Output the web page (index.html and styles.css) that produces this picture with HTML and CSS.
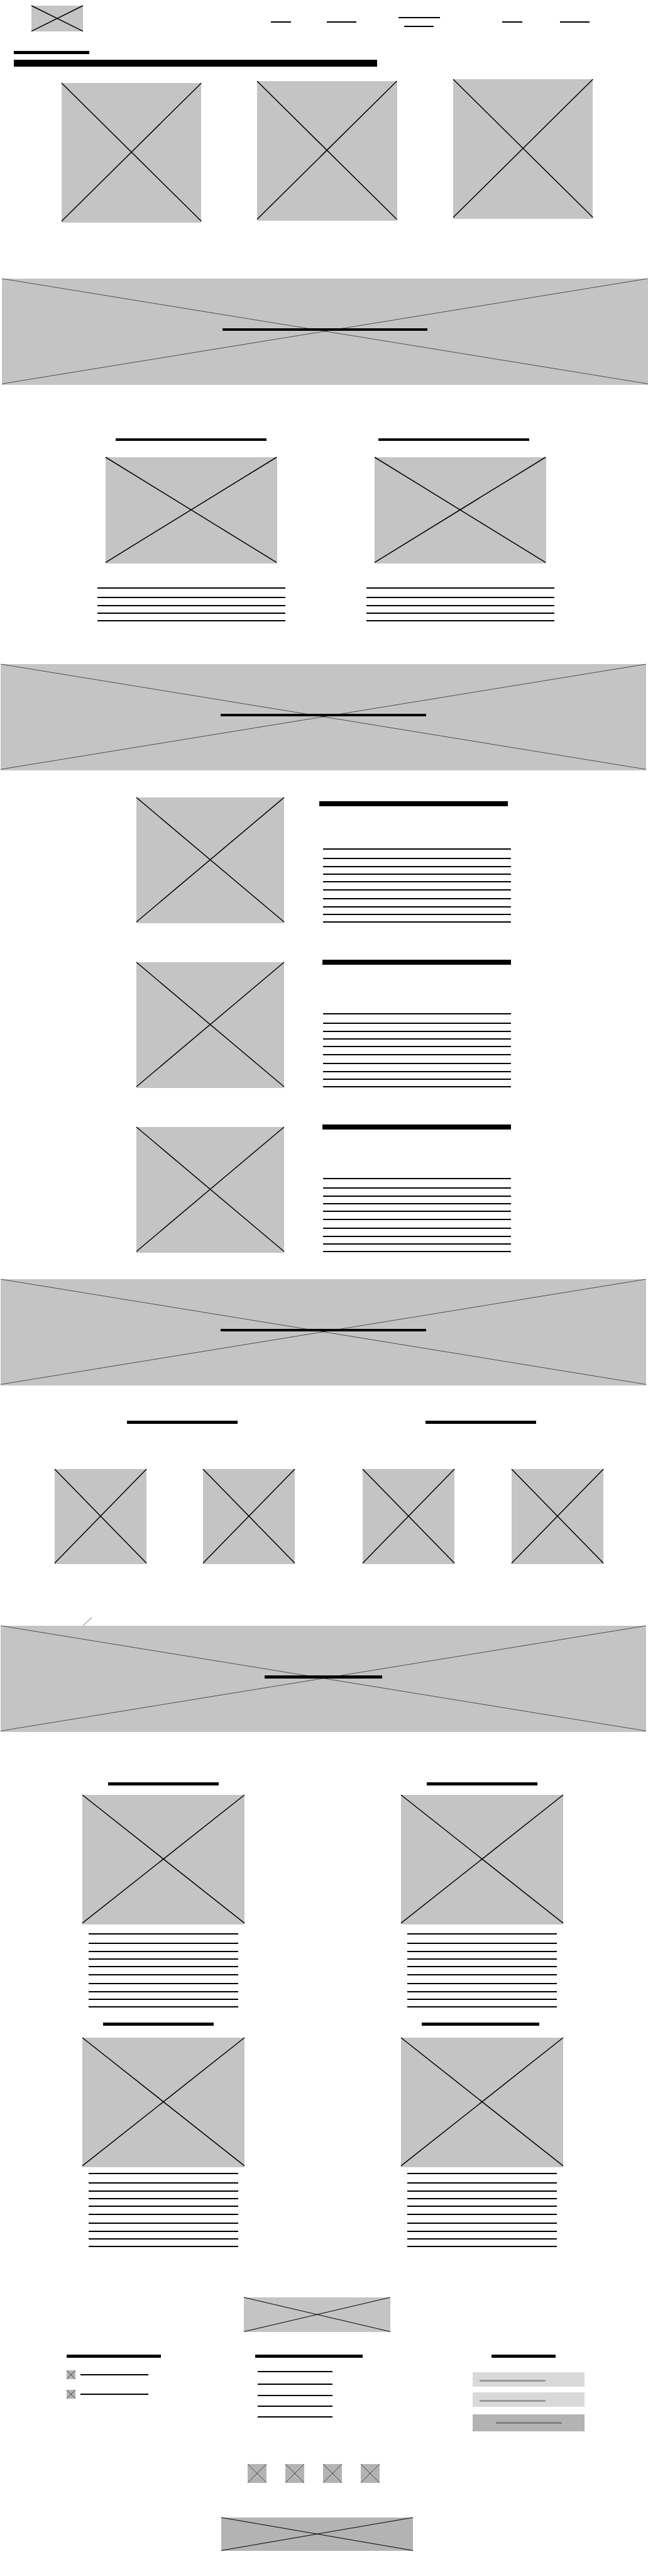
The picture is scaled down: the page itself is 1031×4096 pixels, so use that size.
FILE: index.html
```
<!DOCTYPE html>
<html lang="en">
<head>
<meta charset="utf-8">
<meta name="viewport" content="width=device-width, initial-scale=1">
<title>Home page wireframe</title>
<link rel="stylesheet" href="styles.css">
</head>
<body>
<svg class="defs" aria-hidden="true">
  <symbol id="cross" viewBox="0 0 100 100" preserveAspectRatio="none" overflow="visible">
    <path d="M0 0L100 99M100 0L0 99" vector-effect="non-scaling-stroke"/>
  </symbol>
</svg>

<header class="site-header">
  <svg class="box logo"><use href="#cross"/></svg>
  <nav class="nav" aria-label="Main">
    <a href="#" aria-label="Home"><span class="line w-32"></span></a>
    <a href="#" aria-label="About"><span class="line w-47"></span></a>
    <a href="#" class="nav-double" aria-label="Services"><span class="line w-66"></span><span class="line w-47"></span></a>
    <a href="#" aria-label="Work"><span class="line w-32"></span></a>
    <a href="#" aria-label="Contact"><span class="line w-47"></span></a>
  </nav>
</header>

<main>
  <section class="intro">
    <p class="bar intro-kicker"></p>
    <h1 class="bar intro-title"></h1>
  </section>

  <section class="cards">
    <svg class="box card"><use href="#cross"/></svg>
    <svg class="box card"><use href="#cross"/></svg>
    <svg class="box card"><use href="#cross"/></svg>
  </section>

  <section class="banner banner-first">
    <svg class="box thin"><use href="#cross"/></svg>
    <h2 class="bar"></h2>
  </section>

  <section class="duo">
    <div class="duo-heads">
      <h3 class="bar"></h3>
      <h3 class="bar"></h3>
    </div>
    <div class="duo-columns">
      <article>
        <svg class="box"><use href="#cross"/></svg>
        <ul class="lines"><li></li><li></li><li></li><li></li><li></li></ul>
      </article>
      <article>
        <svg class="box"><use href="#cross"/></svg>
        <ul class="lines"><li></li><li></li><li></li><li></li><li></li></ul>
      </article>
    </div>
  </section>

  <section class="banner">
    <svg class="box thin"><use href="#cross"/></svg>
    <h2 class="bar"></h2>
  </section>

  <section class="features">
    <article class="feature feature-lead">
      <svg class="box"><use href="#cross"/></svg>
      <div class="feature-text">
        <h3 class="bar"></h3>
        <ul class="lines"><li></li><li></li><li></li><li></li><li></li><li></li><li></li><li></li><li></li><li></li></ul>
      </div>
    </article>
    <article class="feature">
      <svg class="box"><use href="#cross"/></svg>
      <div class="feature-text">
        <h3 class="bar"></h3>
        <ul class="lines"><li></li><li></li><li></li><li></li><li></li><li></li><li></li><li></li><li></li><li></li></ul>
      </div>
    </article>
    <article class="feature">
      <svg class="box"><use href="#cross"/></svg>
      <div class="feature-text">
        <h3 class="bar"></h3>
        <ul class="lines"><li></li><li></li><li></li><li></li><li></li><li></li><li></li><li></li><li></li><li></li></ul>
      </div>
    </article>
  </section>

  <section class="banner">
    <svg class="box thin"><use href="#cross"/></svg>
    <h2 class="bar"></h2>
  </section>

  <section class="gallery">
    <div class="gallery-heads">
      <h3 class="bar"></h3>
      <h3 class="bar"></h3>
    </div>
    <div class="gallery-items">
      <svg class="box"><use href="#cross"/></svg>
      <svg class="box"><use href="#cross"/></svg>
      <svg class="box"><use href="#cross"/></svg>
      <svg class="box"><use href="#cross"/></svg>
    </div>
  </section>

  <svg class="tick" viewBox="0 0 15 13" aria-hidden="true"><path d="M1 13L15 0"/></svg>

  <section class="banner banner-short">
    <svg class="box thin"><use href="#cross"/></svg>
    <h2 class="bar"></h2>
  </section>

  <section class="posts">
    <article class="post">
      <h3 class="bar"></h3>
      <svg class="box"><use href="#cross"/></svg>
      <ul class="lines"><li></li><li></li><li></li><li></li><li></li><li></li><li></li><li></li><li></li><li></li></ul>
    </article>
    <article class="post">
      <h3 class="bar"></h3>
      <svg class="box"><use href="#cross"/></svg>
      <ul class="lines"><li></li><li></li><li></li><li></li><li></li><li></li><li></li><li></li><li></li><li></li></ul>
    </article>
    <article class="post post-tight">
      <h3 class="bar"></h3>
      <svg class="box"><use href="#cross"/></svg>
      <ul class="lines"><li></li><li></li><li></li><li></li><li></li><li></li><li></li><li></li><li></li><li></li></ul>
    </article>
    <article class="post post-tight">
      <h3 class="bar bar-wide"></h3>
      <svg class="box"><use href="#cross"/></svg>
      <ul class="lines"><li></li><li></li><li></li><li></li><li></li><li></li><li></li><li></li><li></li><li></li></ul>
    </article>
  </section>
</main>

<footer class="site-footer">
  <div class="footer-center">
    <svg class="box medium footer-logo"><use href="#cross"/></svg>
  </div>
  <div class="footer-columns">
    <section class="contact">
      <h4 class="bar"></h4>
      <ul class="contact-list">
        <li><svg class="box dark thin"><use href="#cross"/></svg><span class="line"></span></li>
        <li><svg class="box dark thin"><use href="#cross"/></svg><span class="line"></span></li>
      </ul>
    </section>
    <section class="links">
      <h4 class="bar"></h4>
      <ul class="link-list">
        <li><a href="#" class="line" aria-label="Link one"></a></li>
        <li><a href="#" class="line" aria-label="Link two"></a></li>
        <li><a href="#" class="line" aria-label="Link three"></a></li>
        <li><a href="#" class="line" aria-label="Link four"></a></li>
        <li><a href="#" class="line" aria-label="Link five"></a></li>
      </ul>
    </section>
    <section class="signup">
      <h4 class="bar"></h4>
      <form class="signup-form">
        <input type="text" aria-label="Name">
        <input type="email" aria-label="Email">
        <button type="button" aria-label="Send"></button>
      </form>
    </section>
  </div>
  <div class="footer-center social">
    <a href="#" aria-label="Social one"><svg class="box dark thin"><use href="#cross"/></svg></a>
    <a href="#" aria-label="Social two"><svg class="box dark thin"><use href="#cross"/></svg></a>
    <a href="#" aria-label="Social three"><svg class="box dark thin"><use href="#cross"/></svg></a>
    <a href="#" aria-label="Social four"><svg class="box dark thin"><use href="#cross"/></svg></a>
  </div>
  <div class="footer-center">
    <svg class="box dark medium footer-badge"><use href="#cross"/></svg>
  </div>
</footer>
</body>
</html>
```

FILE: styles.css
```
* {
  box-sizing: border-box;
}

body,
h1,
h2,
h3,
h4,
p,
ul {
  margin: 0;
  padding: 0;
}

body {
  background: #fff;
  font-family: "Liberation Sans", Arial, sans-serif;
}

ul {
  list-style: none;
}

.defs {
  display: none;
}

/* Placeholder primitives: picture box, heading bar, text line */

.box {
  display: block;
  width: 100%;
  background: #c4c4c4;
  overflow: visible;
  fill: none;
  stroke: #000;
  stroke-width: 1.5;
}

.box.medium {
  stroke-width: 1;
}

.box.thin {
  stroke-width: 1;
  stroke: rgba(0, 0, 0, 0.6);
}

.box.dark {
  background: #b3b3b3;
}

.bar {
  height: 5px;
  background: #000;
}

.line,
.lines li {
  display: block;
  height: 2px;
  background: #000;
}

.w-32 { width: 32px; }
.w-47 { width: 47px; }
.w-66 { width: 66px; }

.lines li { margin-bottom: 10px; }
.lines li:nth-child(5n) { margin-bottom: 11px; }
.lines li:nth-child(5n + 1) { margin-bottom: 12px; }
.lines li:nth-child(5n + 2) { margin-bottom: 11px; }
.lines li:first-child { margin-bottom: 13px; }
.lines li:last-child { margin-bottom: 0; }

/* Header */

.site-header {
  display: grid;
  grid-template-columns: 381fr 507fr;
  padding: 9px 93px 0 50px;
}

.logo {
  width: 82px;
  height: 41px;
}

.nav {
  display: grid;
  grid-template-columns: 89fr 114fr 166fr 92fr 46fr;
  align-items: center;
  align-self: end;
  padding-bottom: 7px;
}

.nav-double {
  display: grid;
  justify-content: start;
  justify-items: center;
  gap: 12px;
}

/* Intro and cards */

.intro {
  display: grid;
  gap: 9px;
  padding: 31px 22px 20px;
}

.intro-kicker {
  width: 120px;
}

.intro-title {
  width: 578px;
  max-width: 100%;
  height: 11px;
}

.cards {
  display: grid;
  grid-template-columns: repeat(3, 1fr);
  gap: 89px;
  min-height: 228px;
  padding: 0 88px 0 98px;
}

.card {
  height: 222px;
  align-self: center;
}

.card:first-child { align-self: end; }
.card:last-child { align-self: start; }

/* Banners */

.banner {
  display: grid;
  margin: 0 3px 0 1px;
}

.banner .box {
  grid-area: 1 / 1;
  height: 169px;
}

.banner .bar {
  grid-area: 1 / 1;
  place-self: center;
  width: 327px;
  height: 4px;
  margin-bottom: 7px;
  z-index: 1;
}

.banner-first {
  margin: 89px 0 0 3px;
}

.banner-first .bar {
  width: 326px;
}

.banner-short .bar {
  width: 187px;
  height: 5px;
  margin-bottom: 6px;
}

/* Two columns */

.duo {
  padding: 85px 0 68px;
}

.duo-heads {
  display: grid;
  grid-template-columns: 240fr 240fr;
  column-gap: 178px;
  padding: 0 189px 26px 184px;
}

.duo-heads .bar {
  height: 4px;
}

.duo-columns {
  display: grid;
  grid-template-columns: 1fr 1fr;
  column-gap: 129px;
  padding: 0 149px 0 155px;
}

.duo-columns .box {
  width: 91%;
  height: 169px;
  margin: 0 auto 38px;
}

/* Features */

.features {
  display: grid;
  gap: 58px;
  padding: 43px 218px 42px 217px;
}

.feature {
  display: grid;
  grid-template-columns: 235fr 305fr;
  column-gap: 56px;
}

.feature .box {
  height: 200px;
  margin-top: 4px;
}

.feature-text {
  display: flex;
  flex-direction: column;
  justify-content: space-between;
  padding: 0 0 1px 5px;
}

.feature-text .bar {
  height: 8px;
}

.feature-text .lines {
  padding-left: 1px;
}

.feature-lead .box {
  margin-top: 0;
}

.feature-lead .feature-text {
  padding: 6px 0 1px;
}

.feature-lead .bar {
  margin-right: 5px;
}

.feature-lead .lines {
  padding-left: 6px;
}

/* Gallery */

.gallery {
  padding: 56px 0 85px;
}

.gallery-heads {
  display: grid;
  grid-template-columns: 1fr 1fr;
  column-gap: 299px;
  padding: 0 178px 72px 202px;
}

.gallery-items {
  display: grid;
  grid-template-columns: 236fr 254fr 237fr 146fr;
  padding: 0 71px 0 87px;
}

.gallery-items .box {
  width: 146px;
  height: 151px;
}

.tick {
  display: block;
  width: 15px;
  height: 13px;
  margin-left: 131px;
  fill: none;
  stroke: #666;
}

/* Posts */

.posts {
  display: grid;
  grid-template-columns: 1fr 1fr;
  gap: 24px 249px;
  padding: 80px 135px 80px 131px;
}

.post .bar {
  width: 176px;
  margin: 0 0 15px 41px;
}

.post .box {
  height: 206px;
}

.post .lines {
  padding: 14px 10px 0;
}

.post-tight .bar {
  margin: 0 0 19px 33px;
}

.post-tight .bar-wide {
  width: 187px;
}

.post-tight .lines {
  padding-top: 9px;
}

/* Footer */

.site-footer {
  padding-bottom: 40px;
}

.footer-center {
  display: flex;
  justify-content: center;
  padding-right: 22px;
}

.footer-logo {
  width: 233px;
  height: 55px;
}

.footer-columns {
  display: grid;
  grid-template-columns: 300fr 346fr 178fr;
  padding: 36px 101px 52px 106px;
}

.contact .bar {
  width: 150px;
}

.contact-list {
  display: grid;
  gap: 17px;
  padding-top: 20px;
}

.contact-list li {
  display: flex;
  align-items: center;
  gap: 8px;
}

.contact-list .box {
  width: 14px;
  height: 14px;
}

.contact-list .line {
  width: 108px;
}

.links .bar {
  width: 171px;
}

.link-list {
  width: 123px;
  padding: 21px 0 0 4px;
}

.link-list li { margin-bottom: 15px; }
.link-list li:nth-child(1) { margin-bottom: 18px; }
.link-list li:nth-child(2) { margin-bottom: 16px; }

.signup .bar {
  width: 102px;
  margin-left: 30px;
}

.signup-form {
  display: grid;
  gap: 9px;
  padding-top: 23px;
}

.signup-form input {
  width: 100%;
  height: 23px;
  padding: 0 11px;
  border: 0;
  background: linear-gradient(#999, #999) 11px 12px / 105px 3px no-repeat #d9d9d9;
}

.signup-form button {
  width: 100%;
  height: 27px;
  margin-top: 3px;
  border: 0;
  background: linear-gradient(#808080, #808080) center 12px / 105px 3px no-repeat #b3b3b3;
}

.social {
  gap: 30px;
  padding: 0 33px 55px 0;
}

.social .box {
  width: 30px;
  height: 30px;
}

.footer-badge {
  width: 305px;
  height: 53px;
}
```
